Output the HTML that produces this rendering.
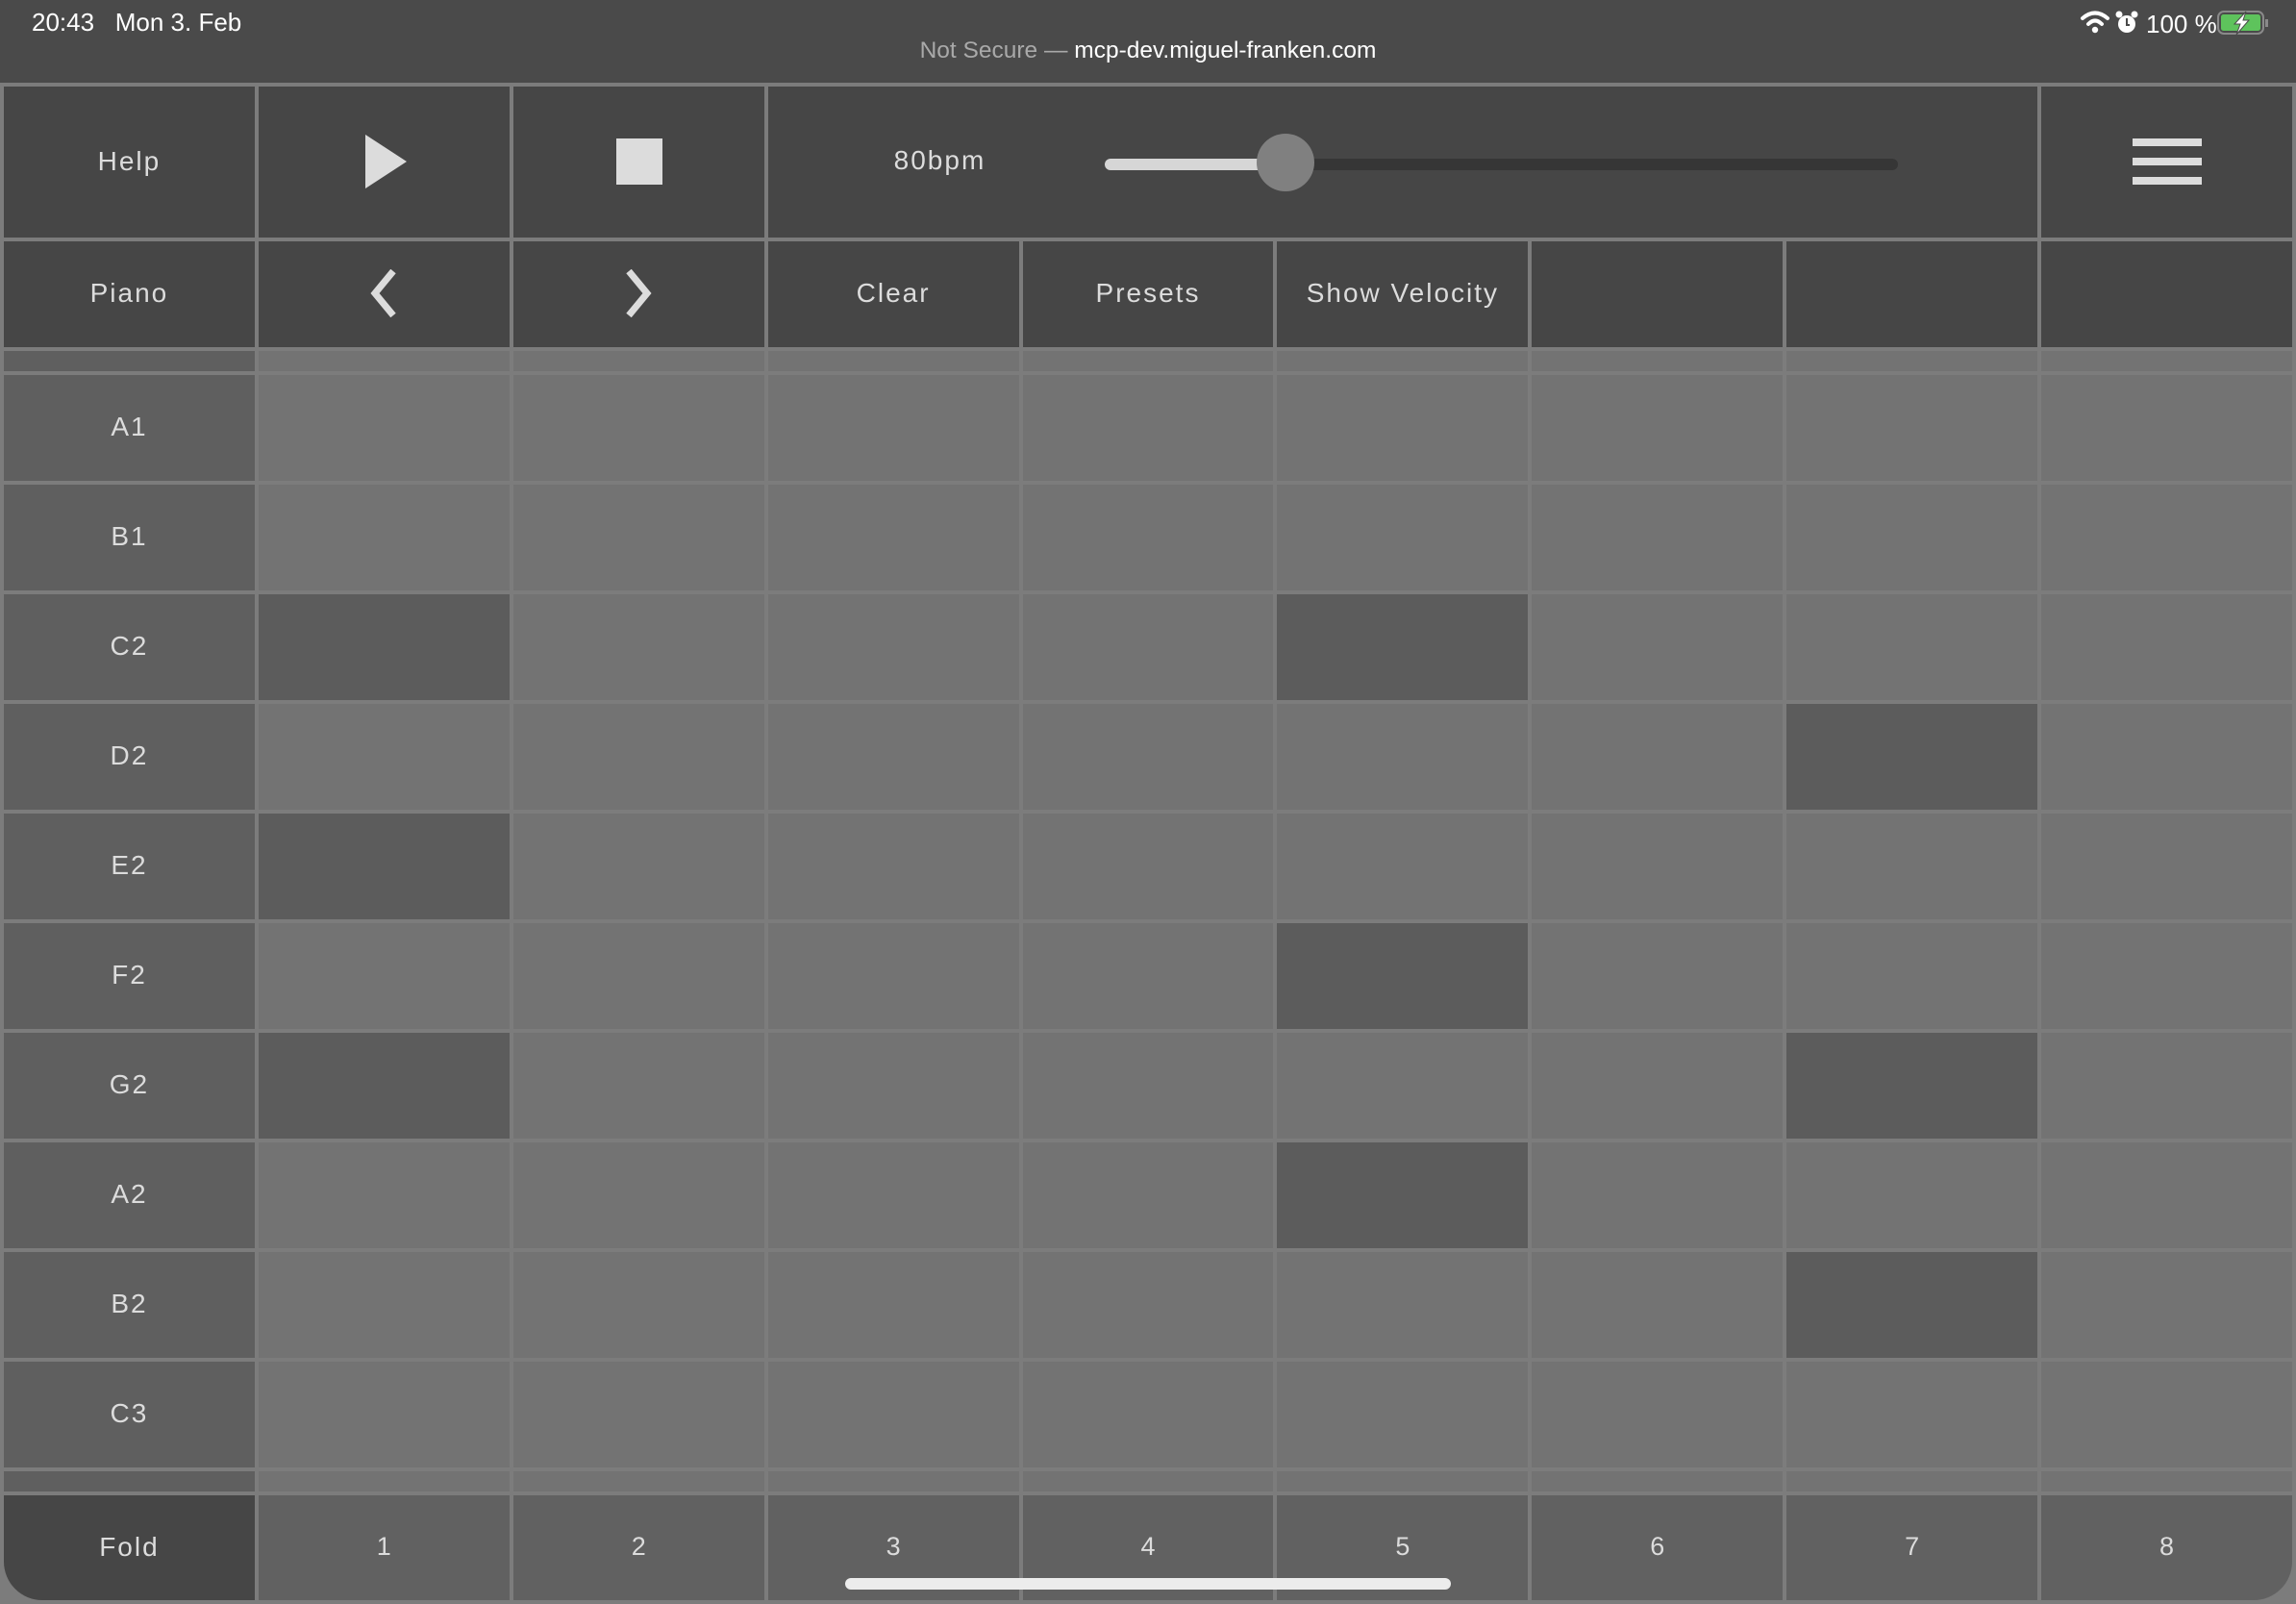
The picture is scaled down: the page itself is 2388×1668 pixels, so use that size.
<!DOCTYPE html>
<html><head><meta charset="utf-8"><style>
*{margin:0;padding:0;box-sizing:border-box}
html,body{width:2388px;height:1668px;overflow:hidden;background:#7c7c7c;font-family:"Liberation Sans",sans-serif}
#sb{position:absolute;left:0;top:0;width:2388px;height:86px;background:#4a4a4a;color:#fff}
#grid{position:absolute;left:0;top:90px;width:2388px;height:1573px;padding:0 4px;display:grid;
grid-template-columns:repeat(9,1fr);grid-template-rows:157px 110px 21px repeat(10,110px) 21px 109px;gap:4px}
.c{background:#737373;display:flex;align-items:center;justify-content:center;color:#dcdcdc;font-size:28px;letter-spacing:2px;padding-bottom:2px}
.d{background:#464646}
.l{background:#5f5f5f}
.a{background:#5c5c5c}
.b{background:#616161;letter-spacing:0;font-size:27px}
</style></head><body>
<div id="sb">
<div style="position:absolute;left:33px;top:8px;font-size:26px">20:43&nbsp;&nbsp;&nbsp;Mon 3. Feb</div>
<div style="position:absolute;left:0;width:2388px;top:39px;text-align:center;font-size:24.5px"><span style="color:#a9a9a9">Not Secure — </span>mcp-dev.miguel-franken.com</div>
<svg style="position:absolute;left:2163px;top:8px" width="205" height="32" viewBox="0 0 205 32">
<path d="M3 11 Q16 0 29 11" stroke="#fff" stroke-width="4" fill="none" stroke-linecap="round"/>
<path d="M9 17 Q16 10 23 17" stroke="#fff" stroke-width="4" fill="none" stroke-linecap="round"/>
<circle cx="16" cy="23" r="3.2" fill="#fff"/>
<circle cx="49" cy="17" r="9" fill="#fff"/><path d="M49 11v7h3" stroke="#4a4a4a" stroke-width="2" fill="none"/>
<circle cx="41" cy="7" r="3.5" fill="#fff"/><circle cx="57" cy="7" r="3.5" fill="#fff"/>
<text x="69" y="26" fill="#fff" font-size="26" font-family="Liberation Sans">100 %</text>
<rect x="144" y="4" width="47" height="23" rx="6" fill="none" stroke="#8a8a8a" stroke-width="2"/>
<rect x="147" y="7" width="41" height="17" rx="2.5" fill="#5ec35c"/>
<rect x="193" y="12" width="3" height="8" fill="#8a8a8a"/>
<path d="M173 4 L161 17 H167 L163 28 L176 13 H170 Z" fill="#fff" stroke="#4a4a4a" stroke-width="1"/>
</svg>
</div>
<div id="grid">
<div class="c d">Help</div>
<div class="c d"><svg width="44" height="56" style="margin-left:6px"><path d="M0 0L43 28L0 56Z" fill="#dcdcdc"/></svg></div>
<div class="c d"><div style="width:48px;height:48px;background:#dcdcdc;margin-left:2px"></div></div>
<div class="c d" style="grid-column:span 5;position:relative;justify-content:flex-start">
<span style="position:absolute;left:131px;top:61px;font-size:28px">80bpm</span>
<div style="position:absolute;left:350px;top:75px;width:825px;height:12px;border-radius:6px;background:#363636"></div>
<div style="position:absolute;left:350px;top:75px;width:200px;height:12px;border-radius:6px;background:#d6d6d6"></div>
<div style="position:absolute;left:508px;top:49px;width:60px;height:60px;border-radius:50%;background:#808080"></div>
</div>
<div class="c d"><svg width="72" height="48"><rect y="0" width="72" height="8" fill="#dcdcdc"/><rect y="20" width="72" height="8" fill="#dcdcdc"/><rect y="40" width="72" height="8" fill="#dcdcdc"/></svg></div>

<div class="c d">Piano</div>
<div class="c d"><svg width="32" height="50"><path d="M26 2L7 25L26 48" stroke="#dcdcdc" stroke-width="7" fill="none"/></svg></div>
<div class="c d"><svg width="32" height="50"><path d="M6 2L25 25L6 48" stroke="#dcdcdc" stroke-width="7" fill="none"/></svg></div>
<div class="c d">Clear</div>
<div class="c d">Presets</div>
<div class="c d">Show Velocity</div>
<div class="c d"></div><div class="c d"></div><div class="c d"></div>

<div class="c l"></div><div class="c"></div><div class="c"></div><div class="c"></div><div class="c"></div><div class="c"></div><div class="c"></div><div class="c"></div><div class="c"></div>

<div class="c l">A1</div><div class="c"></div><div class="c"></div><div class="c"></div><div class="c"></div><div class="c"></div><div class="c"></div><div class="c"></div><div class="c"></div>
<div class="c l">B1</div><div class="c"></div><div class="c"></div><div class="c"></div><div class="c"></div><div class="c"></div><div class="c"></div><div class="c"></div><div class="c"></div>
<div class="c l">C2</div><div class="c a"></div><div class="c"></div><div class="c"></div><div class="c"></div><div class="c a"></div><div class="c"></div><div class="c"></div><div class="c"></div>
<div class="c l">D2</div><div class="c"></div><div class="c"></div><div class="c"></div><div class="c"></div><div class="c"></div><div class="c"></div><div class="c a"></div><div class="c"></div>
<div class="c l">E2</div><div class="c a"></div><div class="c"></div><div class="c"></div><div class="c"></div><div class="c"></div><div class="c"></div><div class="c"></div><div class="c"></div>
<div class="c l">F2</div><div class="c"></div><div class="c"></div><div class="c"></div><div class="c"></div><div class="c a"></div><div class="c"></div><div class="c"></div><div class="c"></div>
<div class="c l">G2</div><div class="c a"></div><div class="c"></div><div class="c"></div><div class="c"></div><div class="c"></div><div class="c"></div><div class="c a"></div><div class="c"></div>
<div class="c l">A2</div><div class="c"></div><div class="c"></div><div class="c"></div><div class="c"></div><div class="c a"></div><div class="c"></div><div class="c"></div><div class="c"></div>
<div class="c l">B2</div><div class="c"></div><div class="c"></div><div class="c"></div><div class="c"></div><div class="c"></div><div class="c"></div><div class="c a"></div><div class="c"></div>
<div class="c l">C3</div><div class="c"></div><div class="c"></div><div class="c"></div><div class="c"></div><div class="c"></div><div class="c"></div><div class="c"></div><div class="c"></div>

<div class="c l"></div><div class="c"></div><div class="c"></div><div class="c"></div><div class="c"></div><div class="c"></div><div class="c"></div><div class="c"></div><div class="c"></div>

<div class="c d" style="border-bottom-left-radius:40px">Fold</div>
<div class="c b">1</div><div class="c b">2</div><div class="c b">3</div><div class="c b">4</div><div class="c b">5</div><div class="c b">6</div><div class="c b">7</div><div class="c b" style="border-bottom-right-radius:40px">8</div>
</div>
<div style="position:absolute;left:879px;top:1641px;width:630px;height:12px;border-radius:6px;background:#ececec"></div>
</body></html>
